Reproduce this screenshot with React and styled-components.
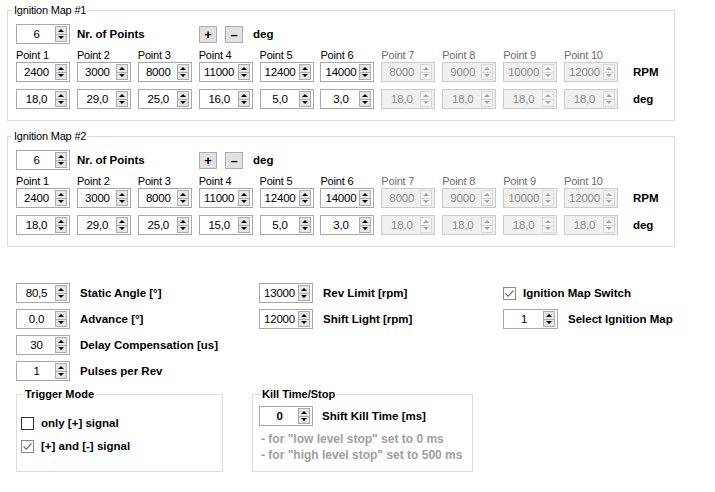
import React from "react";
import styled, { createGlobalStyle } from "styled-components";

const GlobalStyle = createGlobalStyle`
  body {
    margin: 0;
    background: #ffffff;
    font-family: "Liberation Sans", Arial, sans-serif;
    font-size: 11px;
    color: #000000;
  }
`;

const Page = styled.div`
  width: 715px;
  height: 492px;
  padding: 4px 0 0 7px;
  box-sizing: border-box;
  overflow: hidden;
  letter-spacing: -0.2px;
`;

const Group = styled.fieldset`
  margin: ${(p) => p.$mt || 0}px 0 0 0;
  width: ${(p) => p.$w}px;
  box-sizing: border-box;
  min-width: 0;
  border: 1px solid #dcdcdc;
  padding: ${(p) => p.$pad};
`;

const Legend = styled.legend`
  padding: 0 2px;
  margin-left: ${(p) => p.$ml}px;
  line-height: 13px;
  font-size: 11px;
  font-weight: ${(p) => (p.$bold ? "bold" : "normal")};
  letter-spacing: ${(p) => (p.$bold ? "0" : "-0.2px")};
`;

const TopRow = styled.div`
  display: flex;
  align-items: center;
  height: 20px;
`;

const BoldText = styled.span`
  font-weight: bold;
  font-size: 11.5px;
  letter-spacing: 0;
  white-space: nowrap;
`;

const CountLabel = styled(BoldText)`
  width: 122px;
  margin-left: 7px;
`;

const PushButton = styled.div`
  width: 18px;
  height: 17px;
  box-sizing: border-box;
  margin-right: ${(p) => p.$mr}px;
  background: #e1e1e1;
  border: 1px solid #adadad;
  display: flex;
  align-items: center;
  justify-content: center;
  font-weight: bold;
  font-size: 13px;
  line-height: 1;
`;

const PointRow = styled.div`
  display: flex;
  align-items: center;
  gap: 6.9px;
  height: ${(p) => p.$h}px;
  margin-top: ${(p) => p.$mt}px;
`;

const PointHead = styled.div`
  width: 54px;
  line-height: 14px;
  white-space: nowrap;
  color: ${(p) => (p.$off ? "#6d6d6d" : "#000")};
`;

const UnitLabel = styled(BoldText)`
  margin-left: 8px;
`;

const SpinBox = styled.div`
  display: flex;
  width: ${(p) => p.$w || 54}px;
  height: 20px;
  box-sizing: border-box;
  border: 1px solid ${(p) => (p.$off ? "#cccccc" : "#a9a9a9")};
  background: ${(p) => (p.$off ? "#f0f0f0" : "#ffffff")};
  flex-shrink: 0;
`;

const SpinValue = styled.div`
  flex: 1;
  text-align: center;
  line-height: 18px;
  font-size: 11.5px;
  font-weight: ${(p) => (p.$bold ? "bold" : "normal")};
  color: ${(p) => (p.$off ? "#8d8d8d" : "#000")};
  padding-left: 1px;
`;

const SpinArrows = styled.div`
  display: flex;
  flex-direction: column;
  width: 12px;
  margin: 1px 2px 1px 0;
`;

const SpinArrow = styled.div`
  flex: 1;
  box-sizing: border-box;
  border: 1px solid ${(p) => (p.$off ? "#d9d9d9" : "#acacac")};
  border-top-width: ${(p) => (p.$down ? 0 : 1)}px;
  background: ${(p) => (p.$off ? "#f4f4f4" : "#e6e6e6")};
  display: flex;
  align-items: center;
  justify-content: center;
  &::after {
    content: "";
    border-left: 3px solid transparent;
    border-right: 3px solid transparent;
    ${(p) => (p.$down ? "border-top" : "border-bottom")}: 3px solid
      ${(p) => (p.$off ? "#a6a6a6" : "#000")};
  }
`;

const Bottom = styled.div`
  display: grid;
  grid-template-columns: 236px 251px auto;
  grid-template-rows: auto auto;
  row-gap: 7px;
  margin: 36px 0 0 9px;
  align-items: start;
`;

const Stack = styled.div`
  display: flex;
  flex-direction: column;
  gap: 6px;
  padding-left: ${(p) => p.$pl || 0}px;
`;

const FieldRow = styled.div`
  display: flex;
  align-items: center;
  height: 20px;
  gap: ${(p) => p.$gap || 10}px;
`;

const CheckRow = styled.div`
  display: flex;
  align-items: center;
  height: 20px;
  gap: 7px;
  margin-top: ${(p) => p.$mt || 0}px;
`;

const CheckBox = styled.div`
  width: 13px;
  height: 13px;
  box-sizing: border-box;
  border: 1px solid ${(p) => (p.$checked ? "#8a8a8a" : "#333333")};
  background: #ffffff;
  display: flex;
  align-items: center;
  justify-content: center;
  flex-shrink: 0;
`;

const Note = styled.div`
  color: #a0a0a0;
  font-weight: bold;
  font-size: 12px;
  line-height: 16px;
  letter-spacing: 0;
  padding-left: 2px;
  white-space: nowrap;
`;

const Notes = styled.div`
  margin-top: 5px;
`;

const Spinner = ({ value, off, bold, w }) => (
  <SpinBox $off={off} $w={w}>
    <SpinValue $off={off} $bold={bold}>
      {value}
    </SpinValue>
    <SpinArrows>
      <SpinArrow $off={off} />
      <SpinArrow $off={off} $down />
    </SpinArrows>
  </SpinBox>
);

const Check = ({ checked, label }) => (
  <>
    <CheckBox $checked={checked}>
      {checked && (
        <svg width="11" height="11" viewBox="0 0 11 11">
          <polyline
            points="1.5,5.5 4.2,8.2 9.5,2.5"
            fill="none"
            stroke="#6f6f6f"
            strokeWidth="1.2"
          />
        </svg>
      )}
    </CheckBox>
    <BoldText>{label}</BoldText>
  </>
);

const rpm = [2400, 3000, 8000, 11000, 12400, 14000, 8000, 9000, 10000, 12000];
const maps = [
  {
    title: "Ignition Map #1",
    deg: ["18,0", "29,0", "25,0", "16,0", "5,0", "3,0", "18,0", "18,0", "18,0", "18,0"],
  },
  {
    title: "Ignition Map #2",
    deg: ["18,0", "29,0", "25,0", "15,0", "5,0", "3,0", "18,0", "18,0", "18,0", "18,0"],
  },
];
const active = 6;

const MapGroup = ({ map, mt }) => (
  <Group $w={668} $mt={mt} $pad="7px 8px 11px 8px">
    <Legend $ml={-4}>{map.title}</Legend>
    <TopRow>
      <Spinner value={active} />
      <CountLabel>Nr. of Points</CountLabel>
      <PushButton $mr={8}>+</PushButton>
      <PushButton $mr={10}>–</PushButton>
      <BoldText>deg</BoldText>
    </TopRow>
    <PointRow $h={14} $mt={4}>
      {rpm.map((_, i) => (
        <PointHead key={i} $off={i >= active}>
          Point {i + 1}
        </PointHead>
      ))}
    </PointRow>
    <PointRow $h={20} $mt={0}>
      {rpm.map((v, i) => (
        <Spinner key={i} value={v} off={i >= active} />
      ))}
      <UnitLabel>RPM</UnitLabel>
    </PointRow>
    <PointRow $h={20} $mt={7}>
      {map.deg.map((v, i) => (
        <Spinner key={i} value={v} off={i >= active} />
      ))}
      <UnitLabel>deg</UnitLabel>
    </PointRow>
  </Group>
);

const App = () => {
  return (
    <Page>
      <GlobalStyle />
      <MapGroup map={maps[0]} />
      <MapGroup map={maps[1]} mt={9} />
      <Bottom>
        <Stack>
          <FieldRow>
            <Spinner value="80,5" />
            <BoldText>Static Angle [°]</BoldText>
          </FieldRow>
          <FieldRow>
            <Spinner value="0,0" />
            <BoldText>Advance [°]</BoldText>
          </FieldRow>
          <FieldRow>
            <Spinner value="30" />
            <BoldText>Delay Compensation [us]</BoldText>
          </FieldRow>
          <FieldRow>
            <Spinner value="1" />
            <BoldText>Pulses per Rev</BoldText>
          </FieldRow>
        </Stack>
        <Stack $pl={7}>
          <FieldRow>
            <Spinner value="13000" />
            <BoldText>Rev Limit [rpm]</BoldText>
          </FieldRow>
          <FieldRow>
            <Spinner value="12000" />
            <BoldText>Shift Light [rpm]</BoldText>
          </FieldRow>
        </Stack>
        <Stack>
          <CheckRow>
            <Check checked label="Ignition Map Switch" />
          </CheckRow>
          <FieldRow>
            <Spinner value="1" w={55} />
            <BoldText>Select Ignition Map</BoldText>
          </FieldRow>
        </Stack>
        <Group $w={207} $pad="12px 4px 15px 4px">
          <Legend $ml={2} $bold>
            Trigger Mode
          </Legend>
          <CheckRow>
            <Check label="only [+] signal" />
          </CheckRow>
          <CheckRow $mt={3}>
            <Check checked label="[+] and [-] signal" />
          </CheckRow>
        </Group>
        <Group $w={221} $pad="5px 6px 8px 6px">
          <Legend $ml={1} $bold>
            Kill Time/Stop
          </Legend>
          <FieldRow $gap={9}>
            <Spinner value="0" bold />
            <BoldText>Shift Kill Time [ms]</BoldText>
          </FieldRow>
          <Notes>
            <Note>- for "low level stop" set to 0 ms</Note>
            <Note>- for "high level stop" set to 500 ms</Note>
          </Notes>
        </Group>
      </Bottom>
    </Page>
  );
};

export default App;
